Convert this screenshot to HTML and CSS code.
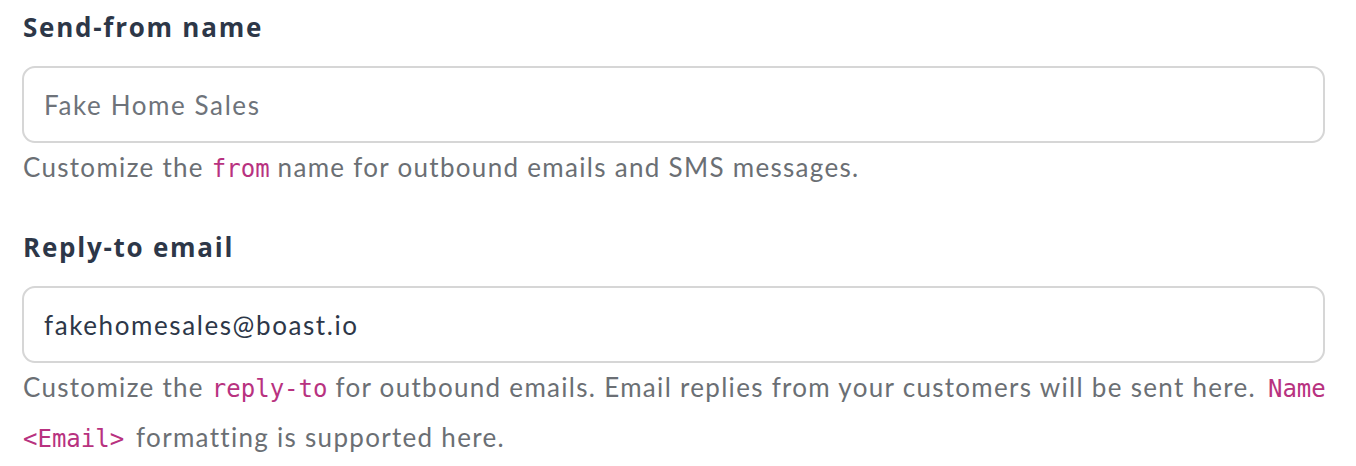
FILE: index.html
```html
<!DOCTYPE html>
<html>
<head>
<meta charset="utf-8">
<link rel="stylesheet" href="styles.css">
</head>
<body>
<div class="form">
  <div class="field">
    <label class="label">Send-from name</label>
    <div class="input placeholder">Fake Home Sales</div>
    <p class="help">Customize the <code>from</code> name for outbound emails and SMS messages.</p>
  </div>
  <div class="field">
    <label class="label">Reply-to email</label>
    <div class="input">fakehomesales@boast.io</div>
    <p class="help">Customize the <code>reply-to</code> for outbound emails. Email replies from your customers will be sent here. <code class="spaced">Name &lt;Email&gt;</code> formatting is supported here.</p>
  </div>
</div>
</body>
</html>
```

FILE: styles.css
```css
html, body {
  margin: 0;
  padding: 0;
  background: #ffffff;
}
.form {
  padding: 7px 31px 0 22px;
  display: flex;
  flex-direction: column;
  gap: 34px;
  font-family: "Lato", "Open Sans", sans-serif;
}
.field {
  display: flex;
  flex-direction: column;
}
.label {
  font-family: "Open Sans", "Noto Sans", sans-serif;
  font-weight: 700;
  font-size: 26px;
  line-height: 40px;
  letter-spacing: 1.75px;
  color: #2d3748;
  margin-bottom: 19px;
  padding-left: 1px;
}
.input {
  height: 77px;
  box-sizing: border-box;
  border: 2px solid #d6d6d6;
  border-radius: 13px;
  padding: 0 20px;
  display: flex;
  align-items: center;
  font-size: 26px;
  letter-spacing: 1.6px;
  color: #2d3748;
}
.input.placeholder {
  color: #6e737a;
}
.help {
  margin: 0 -24px 0 0;
  font-size: 26px;
  letter-spacing: 1.3px;
  line-height: 48px;
  color: #6b6f74;
  padding-left: 1px;
}
code {
  font-family: "DejaVu Sans Mono", monospace;
  font-size: 24px;
  letter-spacing: 0;
  color: #b83280;
}
code.spaced {
  padding: 0 4px;
}
```
